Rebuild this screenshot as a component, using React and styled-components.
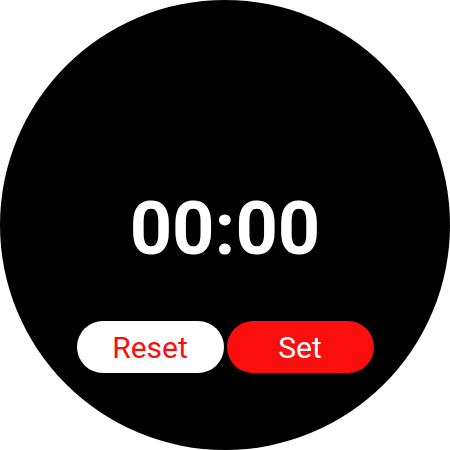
import styled, { createGlobalStyle } from 'styled-components';

const GlobalStyle = createGlobalStyle`
  html, body {
    margin: 0;
    padding: 0;
    background: #fff;
  }
  body {
    font-family: Roboto, "Liberation Sans", sans-serif;
  }
`;

const Face = styled.div`
  width: 450px;
  height: 450px;
  border-radius: 50%;
  background: #000;
  display: flex;
  flex-direction: column;
  align-items: center;
  padding-top: 192px;
  box-sizing: border-box;
`;

const Time = styled.div`
  color: #fff;
  font-size: 74px;
  font-weight: 700;
  line-height: 74px;
`;

const Actions = styled.div`
  display: flex;
  gap: 3px;
  margin-top: 55px;
`;

const Pill = styled.button`
  width: 147px;
  height: 52px;
  border: none;
  border-radius: 26px;
  padding: 0;
  font-family: Roboto, "Liberation Sans", sans-serif;
  font-size: 30px;
  line-height: 54px;
  background: ${(props) => (props.primary ? '#fb0e0e' : '#fff')};
  color: ${(props) => (props.primary ? '#fff' : '#fb0e0e')};
`;

export default function App() {
  return (
    <>
      <GlobalStyle />
      <Face>
        <Time>00:00</Time>
        <Actions>
          <Pill>Reset</Pill>
          <Pill primary>Set</Pill>
        </Actions>
      </Face>
    </>
  );
}
